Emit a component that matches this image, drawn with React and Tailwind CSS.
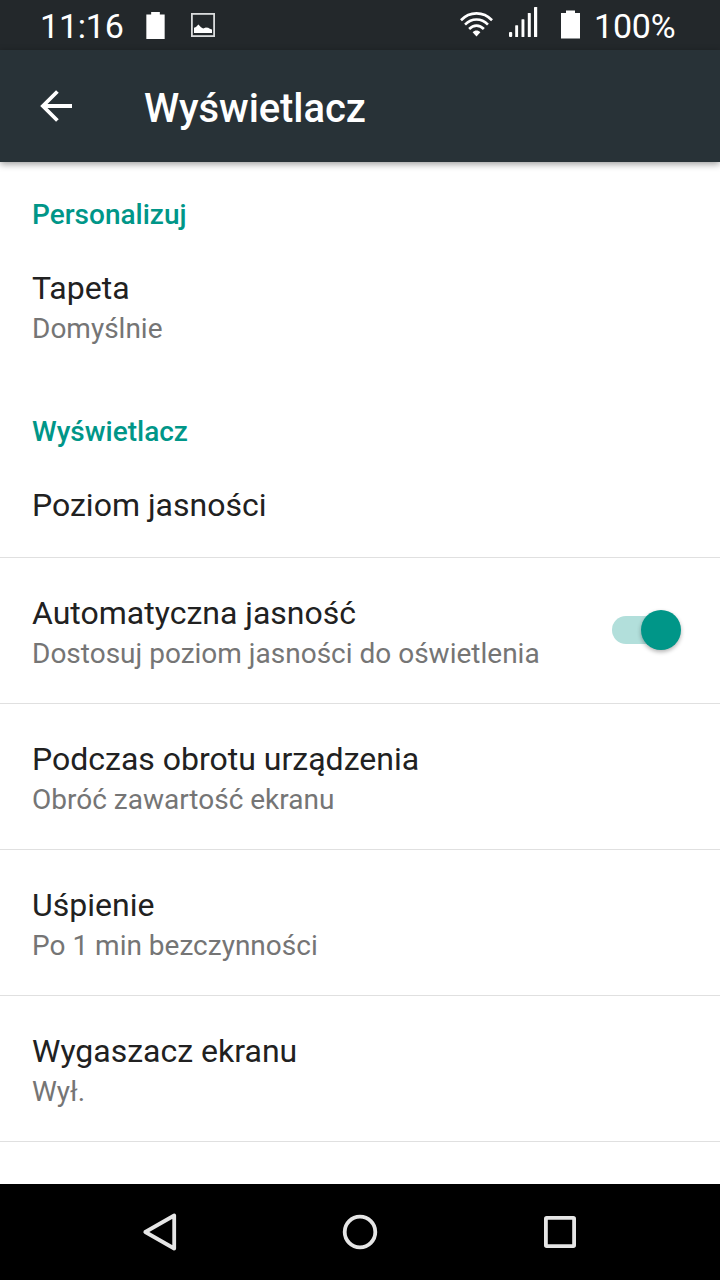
import React from 'react';

const sections = [
    {
        title: 'Personalizuj',
        items: [{ title: 'Tapeta', summary: 'Domyślnie' }],
    },
    {
        title: 'Wyświetlacz',
        items: [
            { title: 'Poziom jasności' },
            { title: 'Automatyczna jasność', summary: 'Dostosuj poziom jasności do oświetlenia', toggle: true },
            { title: 'Podczas obrotu urządzenia', summary: 'Obróć zawartość ekranu' },
            { title: 'Uśpienie', summary: 'Po 1 min bezczynności' },
            { title: 'Wygaszacz ekranu', summary: 'Wył.' },
        ],
    },
];

const BatteryIcon = ({ className }) => (
    <svg viewBox="0 0 19 28" className={className} fill="#fff">
        <path d="M5 0h9v2.5h5V28H0V2.5h5z" />
    </svg>
);

const PictureIcon = () => (
    <svg viewBox="0 0 24 24" className="w-6 h-6 ml-[26px]">
        <rect x="0.9" y="0.9" width="22.2" height="22.2" fill="none" stroke="#d9dbdc" strokeWidth="1.8" />
        <path d="M3 20v-5.2l2-.8 2.4-2.4L10 14.2l2.2 1.4 2.6-1 2.4.2 1.6 1 2.2.6V20z" fill="#fff" />
    </svg>
);

const WifiIcon = () => (
    <svg viewBox="0 0 34 26" preserveAspectRatio="none" className="w-[33px] h-[26px]" fill="none" stroke="#fff" strokeWidth="2.7">
        <path d="M1 9.2C10 0 24 0 33 9.2" />
        <path d="M5.2 13.6C12 6.8 22 6.8 28.8 13.6" />
        <path d="M9.4 18C14 13.4 20 13.4 24.6 18" />
        <path d="M13 21.3C15.3 19 18.7 19 21 21.3L17 25.4z" fill="#fff" stroke="none" />
    </svg>
);

const SignalIcon = () => (
    <svg viewBox="0 0 29 30" className="w-[29px] h-[30px] ml-4" fill="#fff">
        <rect x="0" y="25" width="3.2" height="5" rx="1" />
        <rect x="6.2" y="18.2" width="2.9" height="11.8" rx="0.6" />
        <rect x="12.5" y="12.2" width="2.9" height="17.8" rx="0.6" />
        <rect x="18.8" y="6" width="3" height="24" rx="0.6" />
        <rect x="25" y="0" width="3.2" height="30" rx="0.6" />
    </svg>
);

const StatusBar = () => (
    <div className="h-[50px] shrink-0 bg-[#23282b] flex items-start justify-between pl-10 pr-[44px] text-white text-[34px] leading-[40px] tracking-[-0.2px]">
        <div className="flex items-start">
            <span className="w-[84px] mt-[6px] whitespace-nowrap">11:16</span>
            <BatteryIcon className="w-[19px] h-[27px] mt-3 ml-[22px]" />
            <div className="mt-[13px]"><PictureIcon /></div>
        </div>
        <div className="flex items-start">
            <div className="mt-[11px]"><WifiIcon /></div>
            <div className="mt-[7px]"><SignalIcon /></div>
            <BatteryIcon className="w-[19px] h-[29px] mt-[10px] ml-[23px]" />
            <span className="w-[82px] mt-[6px] ml-[14px] whitespace-nowrap">100%</span>
        </div>
    </div>
);

const Header = () => (
    <header className="relative z-10 h-28 shrink-0 bg-[#283237] flex items-center shadow-[0_2px_7px_rgba(0,0,0,0.4)]">
        <svg viewBox="0 0 32 32" className="w-8 h-8 ml-10" fill="none" stroke="#fff" strokeWidth="4">
            <path d="M32 16H3.5" />
            <path d="M17.4 1.5L2.9 16l14.5 14.5" strokeWidth="3.8" />
        </svg>
        <h1 className="ml-[72px] mt-[6px] text-white text-[40px] leading-[48px] font-medium tracking-[-0.1px]">Wyświetlacz</h1>
    </header>
);

const Toggle = () => (
    <div className="relative w-[69px] h-10 mt-[52px] mr-[39px]">
        <div className="absolute left-0 top-[6px] w-12 h-7 rounded-full bg-[#b2dfdb]"></div>
        <div className="absolute right-0 top-0 w-10 h-10 rounded-full bg-[#009688] shadow-[0_2px_4px_rgba(0,0,0,0.3)]"></div>
    </div>
);

const Item = ({ item, divider }) => (
    <div className={`flex items-start justify-between ${item.summary ? 'h-[146px]' : 'h-[108px]'} ${divider ? 'border-b border-[#e0e0e0]' : ''}`}>
        <div className="pl-8 pt-9">
            <p className="text-[32px] leading-[38px] text-[#212121]">{item.title}</p>
            {item.summary && <p className="mt-[5px] text-[28px] leading-[34px] text-[#757575]">{item.summary}</p>}
        </div>
        {item.toggle && <Toggle />}
    </div>
);

const NavBar = () => (
    <nav className="h-24 shrink-0 bg-black flex items-center justify-center gap-40 text-[#e6e6e6]">
        <svg viewBox="0 0 40 40" className="w-10 h-10" fill="none" stroke="currentColor" strokeWidth="3.8" strokeLinejoin="round">
            <path d="M34.2 3.5v33L5.3 20z" />
        </svg>
        <svg viewBox="0 0 40 40" className="w-10 h-10" fill="none" stroke="currentColor" strokeWidth="3.8">
            <circle cx="20" cy="20" r="15.3" />
        </svg>
        <svg viewBox="0 0 40 40" className="w-10 h-10" fill="none" stroke="currentColor" strokeWidth="3.8" strokeLinejoin="round">
            <rect x="5.9" y="5.9" width="28.2" height="28.2" rx="0.8" />
        </svg>
    </nav>
);

export default function App() {
    return (
        <div className="w-[720px] h-[1280px] flex flex-col overflow-hidden bg-white font-['Roboto',sans-serif]">
            <StatusBar />
            <Header />
            <main className="flex-1 min-h-0 overflow-hidden">
                {sections.map((section) => (
                    <section key={section.title}>
                        <h2 className="h-[71px] pt-9 pl-8 text-[28px] leading-[34px] font-medium text-[#009688]">{section.title}</h2>
                        {section.items.map((item) => (
                            <Item key={item.title} item={item} divider={section.items.length > 1} />
                        ))}
                    </section>
                ))}
            </main>
            <NavBar />
        </div>
    );
}
